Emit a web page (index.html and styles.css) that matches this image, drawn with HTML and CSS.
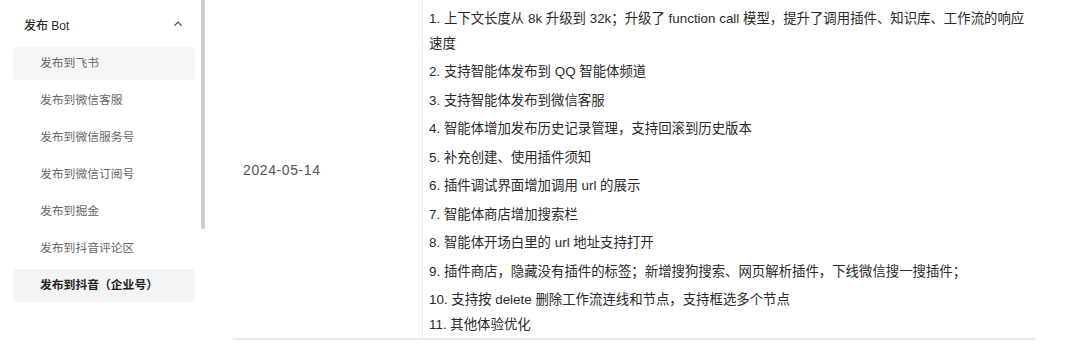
FILE: index.html
```html
<!DOCTYPE html>
<html lang="zh-CN">
<head>
<meta charset="utf-8">
<title>发布 Bot</title>
<link rel="stylesheet" href="styles.css">
</head>
<body>
<div class="page">
  <aside class="sidebar">
    <div class="group-head">
      <span class="group-title">发布 Bot</span>
      <svg class="chev" width="8" height="5" viewBox="0 0 8 5"><path d="M0.8 4.3 L4 1.1 L7.2 4.3" fill="none" stroke="#444" stroke-width="1.2" stroke-linecap="round" stroke-linejoin="round"/></svg>
    </div>
    <ul class="nav">
      <li class="nav-item hover">发布到飞书</li>
      <li class="nav-item">发布到微信客服</li>
      <li class="nav-item">发布到微信服务号</li>
      <li class="nav-item">发布到微信订阅号</li>
      <li class="nav-item">发布到掘金</li>
      <li class="nav-item">发布到抖音评论区</li>
      <li class="nav-item active">发布到抖音（企业号）</li>
    </ul>
  </aside>
  <div class="scroll-track"><div class="scroll-thumb"></div></div>
  <main class="content">
    <div class="table">
      <div class="row">
        <div class="cell date">2024-05-14</div>
        <div class="cell notes">
          <p class="note">1. 上下文长度从 8k 升级到 32k；升级了 function call 模型，提升了调用插件、知识库、工作流的响应速度</p>
          <p class="note">2. 支持智能体发布到 QQ 智能体频道</p>
          <p class="note">3. 支持智能体发布到微信客服</p>
          <p class="note">4. 智能体增加发布历史记录管理，支持回滚到历史版本</p>
          <p class="note">5. 补充创建、使用插件须知</p>
          <p class="note">6. 插件调试界面增加调用 url 的展示</p>
          <p class="note">7. 智能体商店增加搜索栏</p>
          <p class="note">8. 智能体开场白里的 url 地址支持打开</p>
          <p class="note">9. 插件商店，隐藏没有插件的标签；新增搜狗搜索、网页解析插件，下线微信搜一搜插件；</p>
          <p class="note">10. 支持按 delete 删除工作流连线和节点，支持框选多个节点</p>
          <p class="note last">11. 其他体验优化</p>
        </div>
      </div>
    </div>
  </main>
</div>
</body>
</html>
```

FILE: styles.css
```css
* { box-sizing: border-box; }
html, body {
  margin: 0;
  padding: 0;
  background: #ffffff;
}
body {
  font-family: "Liberation Sans", "Noto Sans CJK SC", sans-serif;
  font-size: 13px;
  color: #333;
  width: 1080px;
  height: 344px;
  overflow: hidden;
}
.page {
  display: flex;
  align-items: flex-start;
  height: 344px;
}
.sidebar {
  width: 201px;
  flex: none;
  padding: 8px 6px 0 13px;
}
.group-head {
  height: 33px;
  display: flex;
  align-items: center;
  justify-content: space-between;
  padding: 0 13px 0 11px;
}
.group-title {
  font-weight: 500;
  color: #2b2b2b;
  font-size: 12px;
}
.chev { display: block; margin-top: -2px; }
.nav {
  list-style: none;
  margin: 5.5px 0 0;
  padding: 0;
  display: flex;
  flex-direction: column;
  gap: 4px;
}
.nav-item {
  height: 33px;
  line-height: 33px;
  padding-left: 27px;
  border-radius: 4px;
  color: #666;
  font-size: 11.8px;
}
.nav-item.hover { background: #f5f6f8; }
.nav-item.active {
  background: #f3f4f6;
  color: #222;
  font-weight: 700;
}
.scroll-track {
  width: 4px;
  flex: none;
  height: 344px;
}
.scroll-thumb {
  width: 4px;
  height: 229px;
  background: #cfcfcf;
  border-radius: 0 0 2px 2px;
}
.content {
  flex: none;
  margin-left: 28px;
  width: 802px;
}
.table {
  border-bottom: 2px solid #e9e9e9;
}
.row {
  display: flex;
  height: 338px;
}
.cell.date {
  width: 189px;
  flex: none;
  display: flex;
  align-items: center;
  padding-left: 10px;
  padding-top: 2px;
  color: #555;
  font-size: 14px;
  letter-spacing: 0.6px;
}
.cell.notes {
  flex: 1;
  border-left: 1px solid #ececec;
  padding: 5.5px 0 0 6px;
}
.note {
  margin: 3.5px 0 0;
  line-height: 25px;
  color: #2a2a2a;
  font-size: 13.4px;
  padding-right: 10px;
}
.note:first-child { margin-top: 0; }
.note.last { margin-top: 0; }
```
